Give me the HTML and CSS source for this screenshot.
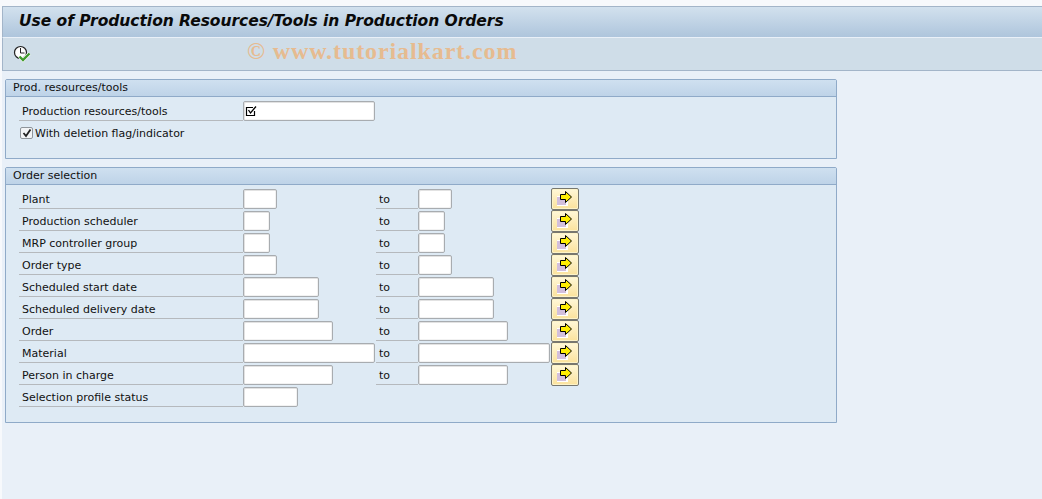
FILE: index.html
```html
<!DOCTYPE html>
<html lang="en">
<head>
<meta charset="utf-8">
<title>Use of Production Resources/Tools in Production Orders</title>
<link rel="stylesheet" href="styles.css">
</head>
<body>
<svg class="defs" width="0" height="0" aria-hidden="true">
  <symbol id="multi" viewBox="0 0 20 18">
    <rect x="2" y="6" width="11" height="10" fill="#fff"/>
    <rect x="2" y="7" width="9" height="8" fill="#d3bfdc"/>
    <path d="M5.500 4.500H10.500V1.500L16.500 7L10.500 12.500V9.500H5.500Z" fill="#ffee00" stroke="#000" stroke-width="1"/>
  </symbol>
</svg>
<div class="window">
  <header class="title-bar"><h1>Use of Production Resources/Tools in Production Orders</h1></header>
  <div class="toolbar">
    <svg class="exec" viewBox="0 0 18 18" width="18" height="18">
      <circle cx="7.500" cy="7.500" r="6" fill="#fff" stroke="#222" stroke-width="1.200"/>
      <path d="M7.500 3V8H11.500" fill="none" stroke="#222" stroke-width="1"/>
      <path d="M6.500 11.500L10 15L16.500 8.500" fill="none" stroke="#fff" stroke-width="3.600"/>
      <path d="M6.500 11.500L10 15L16.500 8.500" fill="none" stroke="#3f9a2c" stroke-width="2.400"/>
    </svg>
    <span class="watermark">© www.tutorialkart.com</span>
  </div>
  <main class="content">
    <section class="panel panel-resources">
      <h2>Prod. resources/tools</h2>
      <div class="rows">
        <div class="row">
          <label class="lbl">Production resources/tools</label>
          <span class="field w-mat"><svg class="multi-check" viewBox="0 0 12 12" width="12" height="12"><path d="M9.500 6V10.500H1.500V2.500H8" fill="none" stroke="#000" stroke-width="1.200"/><path d="M3.500 5L5.500 8L11 1.500" fill="none" stroke="#000" stroke-width="1.300"/></svg></span>
        </div>
        <div class="row check-row">
          <span class="check"><svg viewBox="0 0 12 12" width="12" height="12"><path d="M2.500 6L5 9L9.500 2.500" fill="none" stroke="#222" stroke-width="1.800"/></svg></span>
          <span class="check-text">With deletion flag/indicator</span>
        </div>
      </div>
    </section>
    <section class="panel panel-order">
      <h2>Order selection</h2>
      <div class="rows">
        <div class="row"><label class="lbl">Plant</label><div class="c2"><span class="field w-plant"></span></div><label class="lbl to">to</label><div class="c4"><span class="field w-plant"></span></div><button class="more"><svg width="20" height="18"><use href="#multi"/></svg></button></div>
        <div class="row"><label class="lbl">Production scheduler</label><div class="c2"><span class="field w-sch"></span></div><label class="lbl to">to</label><div class="c4"><span class="field w-sch"></span></div><button class="more"><svg width="20" height="18"><use href="#multi"/></svg></button></div>
        <div class="row"><label class="lbl">MRP controller group</label><div class="c2"><span class="field w-sch"></span></div><label class="lbl to">to</label><div class="c4"><span class="field w-sch"></span></div><button class="more"><svg width="20" height="18"><use href="#multi"/></svg></button></div>
        <div class="row"><label class="lbl">Order type</label><div class="c2"><span class="field w-plant"></span></div><label class="lbl to">to</label><div class="c4"><span class="field w-plant"></span></div><button class="more"><svg width="20" height="18"><use href="#multi"/></svg></button></div>
        <div class="row"><label class="lbl">Scheduled start date</label><div class="c2"><span class="field w-date"></span></div><label class="lbl to">to</label><div class="c4"><span class="field w-date"></span></div><button class="more"><svg width="20" height="18"><use href="#multi"/></svg></button></div>
        <div class="row"><label class="lbl">Scheduled delivery date</label><div class="c2"><span class="field w-date"></span></div><label class="lbl to">to</label><div class="c4"><span class="field w-date"></span></div><button class="more"><svg width="20" height="18"><use href="#multi"/></svg></button></div>
        <div class="row"><label class="lbl">Order</label><div class="c2"><span class="field w-ord"></span></div><label class="lbl to">to</label><div class="c4"><span class="field w-ord"></span></div><button class="more"><svg width="20" height="18"><use href="#multi"/></svg></button></div>
        <div class="row"><label class="lbl">Material</label><div class="c2"><span class="field w-mat"></span></div><label class="lbl to">to</label><div class="c4"><span class="field w-mat"></span></div><button class="more"><svg width="20" height="18"><use href="#multi"/></svg></button></div>
        <div class="row"><label class="lbl">Person in charge</label><div class="c2"><span class="field w-ord"></span></div><label class="lbl to">to</label><div class="c4"><span class="field w-ord"></span></div><button class="more"><svg width="20" height="18"><use href="#multi"/></svg></button></div>
        <div class="row"><label class="lbl">Selection profile status</label><div class="c2"><span class="field w-stat"></span></div></div>
      </div>
    </section>
  </main>
</div>
</body>
</html>
```
FILE: styles.css
```css
html, body { margin: 0; padding: 0; height: 499px; overflow: hidden; }
body {
  background: #f7f9fc;
  font-family: "DejaVu Sans", sans-serif;
  font-size: 11px;
  color: #111;
  padding-top: 6px;
  padding-left: 2px;
  box-sizing: border-box;
}
.defs { display: block; height: 0; }
.window { height: 493px; background: #e9f0f8; border-top: 1px solid #a3b5c9; box-sizing: border-box; }
.title-bar {
  height: 30px;
  background: linear-gradient(#d2e1ee, #aec5dc);
  border-left: 1px solid #a3b5c9;
  box-sizing: border-box;
  display: flex;
  align-items: center;
  padding-left: 16px;
}
h1 { margin: 0 0 2px; font-size: 15.500px; letter-spacing: -0.040px; font-weight: bold; font-style: italic; color: #0a0a0a; white-space: nowrap; font-family: "DejaVu Sans", sans-serif; }
.toolbar {
  height: 34px;
  background: #cfdde8;
  border-top: 1px solid #e9f0f8;
  border-left: 1px solid #a3b5c9;
  border-bottom: 1px solid #a3b5c9;
  box-sizing: border-box;
  position: relative;
  display: flex;
  align-items: center;
  padding-left: 10px;
}
.exec { display: block; }
.watermark {
  position: absolute;
  left: 244px;
  top: 0;
  font-family: "Liberation Serif", serif;
  font-weight: bold;
  font-size: 24px;
  letter-spacing: 0.900px;
  color: #e6bb90;
  white-space: nowrap;
}
.content { padding: 8px 0 0 3px; }
.panel {
  width: 832px;
  box-sizing: border-box;
  background: #deeaf4;
  border: 1px solid #8faac8;
  border-radius: 2px 2px 0 0;
}
.panel + .panel { margin-top: 8px; }
.panel-resources { height: 80px; }
.panel-order { height: 256px; }
h2 {
  margin: 0;
  height: 17px;
  line-height: 16px;
  font-size: 11px;
  font-weight: normal;
  padding-left: 7px;
  background: linear-gradient(#cfe0f0, #bed3e8);
  border-bottom: 1px solid #8faac8;
  box-sizing: border-box;
  color: #111;
}
.rows { padding: 3px 0 0 13px; }
.row { display: flex; height: 22px; align-items: flex-start; }
.lbl {
  box-sizing: border-box;
  width: 224px;
  height: 21px;
  line-height: 22px;
  padding-top: 1px;
  padding-left: 3px;
  border-bottom: 1px solid #b5b9bd;
  white-space: nowrap;
  flex: none;
}
.lbl.to { width: 42px; }
.c2, .c4 { width: 133px; flex: none; padding-top: 1px; box-sizing: border-box; height: 22px; }
.row > .field { margin-top: 1px; }
.field {
  display: block;
  box-sizing: border-box;
  height: 20px;
  background: #fff;
  border: 1px solid #a8acb0;
  border-radius: 2px;
  box-shadow: inset 1px 1px 0 #e2e2e2, inset -1px -1px 0 #f2f2f2;
  position: relative;
}
.w-plant { width: 34px; }
.w-sch { width: 27px; }
.w-date { width: 76px; }
.w-ord { width: 90px; }
.w-mat { width: 132px; }
.w-stat { width: 55px; }
.multi-check { position: absolute; left: 1px; top: 3px; }
.check-row { align-items: center; gap: 2px; padding-left: 1px; }
.check {
  width: 13px;
  height: 12px;
  box-sizing: border-box;
  background: #f2f4f6;
  border: 1px solid #8f959b;
  border-radius: 2px;
  display: flex;
  align-items: center;
  justify-content: center;
}
.check svg { flex: none; }
.check-text { white-space: nowrap; }
.more {
  width: 28px;
  height: 22px;
  padding: 0;
  margin: 0;
  box-sizing: border-box;
  background: linear-gradient(#fff8d8, #fbe29c);
  border: 1px solid #77776f;
  border-radius: 2px;
  box-shadow: inset 0 0 0 1px #fdf3c8;
  display: flex;
  align-items: center;
  justify-content: center;
}
.more svg { display: block; }
```
